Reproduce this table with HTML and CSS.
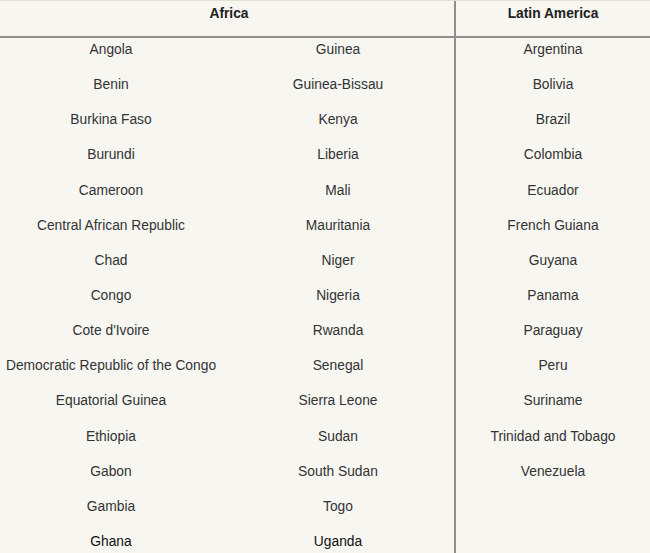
FILE: index.html
```html
<!DOCTYPE html>
<html>
<head>
<meta charset="utf-8">
<link rel="stylesheet" href="styles.css">
</head>
<body>
<div class="table">
  <div class="head head-africa">Africa</div>
  <div class="head head-latam">Latin America</div>

  <div class="cell">Angola</div><div class="cell">Guinea</div><div class="cell la">Argentina</div>
  <div class="cell">Benin</div><div class="cell">Guinea-Bissau</div><div class="cell la">Bolivia</div>
  <div class="cell">Burkina Faso</div><div class="cell">Kenya</div><div class="cell la">Brazil</div>
  <div class="cell">Burundi</div><div class="cell">Liberia</div><div class="cell la">Colombia</div>
  <div class="cell">Cameroon</div><div class="cell">Mali</div><div class="cell la">Ecuador</div>
  <div class="cell">Central African Republic</div><div class="cell">Mauritania</div><div class="cell la">French Guiana</div>
  <div class="cell">Chad</div><div class="cell">Niger</div><div class="cell la">Guyana</div>
  <div class="cell">Congo</div><div class="cell">Nigeria</div><div class="cell la">Panama</div>
  <div class="cell">Cote d'Ivoire</div><div class="cell">Rwanda</div><div class="cell la">Paraguay</div>
  <div class="cell">Democratic Republic of the Congo</div><div class="cell">Senegal</div><div class="cell la">Peru</div>
  <div class="cell">Equatorial Guinea</div><div class="cell">Sierra Leone</div><div class="cell la">Suriname</div>
  <div class="cell">Ethiopia</div><div class="cell">Sudan</div><div class="cell la">Trinidad and Tobago</div>
  <div class="cell">Gabon</div><div class="cell">South Sudan</div><div class="cell la">Venezuela</div>
  <div class="cell">Gambia</div><div class="cell">Togo</div><div class="cell la"></div>
  <div class="cell last">Ghana</div><div class="cell last">Uganda</div><div class="cell la last"></div>
</div>
</body>
</html>
```

FILE: styles.css
```css
html, body {
  margin: 0;
  padding: 0;
  background: #f7f6f1;
  height: 553px;
  overflow: hidden;
}

body {
  border-top: 1px solid #e4e1d2;
  box-sizing: border-box;
  font-family: "Liberation Sans", Arial, sans-serif;
  font-size: 13.8px;
  line-height: 16px;
  color: #333;
}

.table {
  display: grid;
  grid-template-columns: 222px 232px 196px;
  grid-template-rows: 37px;
  grid-auto-rows: 35.15px;
}

.head {
  height: 37px;
  padding-top: 5px;
  box-sizing: border-box;
  font-weight: bold;
  text-align: center;
  color: #222;
  border-bottom: 2px solid #8f8f8c;
}

.head-africa {
  grid-column: 1 / 3;
  padding-left: 4px;
}

.head-latam {
  border-left: 2px solid #8f8f8c;
}

.cell {
  text-align: center;
  padding-top: 4px;
  white-space: nowrap;
}

.la {
  border-left: 2px solid #8f8f8c;
}

.last {
  color: #111;
}
```
